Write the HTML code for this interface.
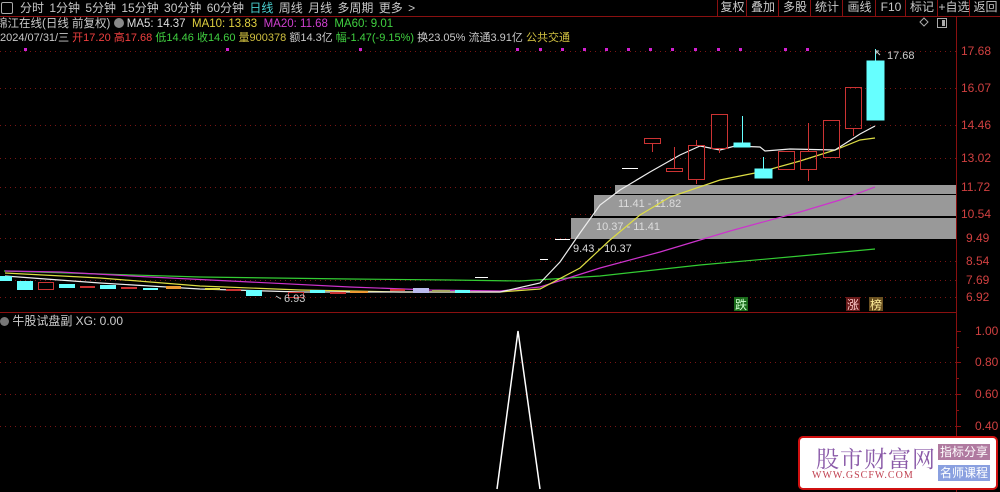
<!DOCTYPE html>
<html><head><meta charset="utf-8"><style>
*{margin:0;padding:0}
body{width:1000px;height:492px;background:#000;overflow:hidden;position:relative;font-family:"Liberation Sans","Noto Sans CJK SC",sans-serif;font-size:12px;color:#c8c8c8}
.tb{position:absolute;left:0;top:0;height:16px;width:1000px;border-bottom:1px solid #8a1010}
.t{position:absolute;top:1px;font-size:12px;line-height:14px;white-space:nowrap}
.btn{position:absolute;top:0;height:16px;border-left:1px solid #8a1010;text-align:center;line-height:15px;font-size:12px;color:#c8c8c8}
.l{position:absolute;white-space:nowrap;font-size:11px;line-height:13px}
</style></head><body>
<div class="tb">
<div style="position:absolute;left:1px;top:2px;width:10px;height:10px;border:1px solid #aaa;border-radius:2px"></div>
<span class="t" style="left:20px;word-spacing:2px">分时 1分钟 5分钟 15分钟 30分钟 60分钟 <span style="color:#4ad0d0">日线</span> 周线 月线 多周期 更多 &gt;</span>
<div class="btn" style="left:717px;width:29px">复权</div>
<div class="btn" style="left:746px;width:32px">叠加</div>
<div class="btn" style="left:778px;width:32px">多股</div>
<div class="btn" style="left:810px;width:32px">统计</div>
<div class="btn" style="left:842px;width:33px">画线</div>
<div class="btn" style="left:875px;width:30px">F10</div>
<div class="btn" style="left:905px;width:32px">标记</div>
<div class="btn" style="left:937px;width:32px">+自选</div>
<div class="btn" style="left:969px;width:31px">返回</div>
</div>
<div class="l" style="left:-4px;top:18px;font-size:11.5px">锦江在线(日线 前复权) <span style="display:inline-block;width:10px;height:10px;border-radius:5px;background:#888;vertical-align:-1px"></span> <span style="color:#ddd">MA5: 14.37</span> &nbsp;<span style="color:#e0d040">MA10: 13.83</span> &nbsp;<span style="color:#d040d0">MA20: 11.68</span> &nbsp;<span style="color:#40d040">MA60: 9.01</span></div>
<div class="l" style="left:0;top:32px;font-size:11px">2024/07/31/三 <span style="color:#f04040">开17.20 高17.68</span> <span style="color:#40d040">低14.46 收14.60</span> <span style="color:#d0c040">量900378</span> 额14.3亿 <span style="color:#40d040">幅-1.47(-9.15%)</span> 换23.05% 流通3.91亿 <span style="color:#d0c040">公共交通</span></div>
<svg width="1000" height="492" style="position:absolute;left:0;top:0">
<g stroke="#8a1010" stroke-width="1"><line x1="956.5" y1="17" x2="956.5" y2="492"/><line x1="0" y1="312.5" x2="956" y2="312.5"/></g>
<g stroke="#7a1515" stroke-dasharray="1,4"><line x1="0" y1="51.5" x2="956" y2="51.5"/><line x1="0" y1="88.5" x2="956" y2="88.5"/><line x1="0" y1="125.5" x2="956" y2="125.5"/><line x1="0" y1="158.5" x2="956" y2="158.5"/><line x1="0" y1="187.5" x2="956" y2="187.5"/><line x1="0" y1="214.5" x2="956" y2="214.5"/><line x1="0" y1="238.5" x2="956" y2="238.5"/><line x1="0" y1="261.5" x2="956" y2="261.5"/><line x1="0" y1="280.5" x2="956" y2="280.5"/><line x1="0" y1="297.5" x2="956" y2="297.5"/><line x1="0" y1="362.5" x2="956" y2="362.5"/><line x1="0" y1="394.5" x2="956" y2="394.5"/><line x1="0" y1="426.5" x2="956" y2="426.5"/></g>
<g fill="#d020d0" ><rect x="24" y="48" width="3" height="3"/><rect x="226" y="48" width="3" height="3"/><rect x="359" y="48" width="3" height="3"/><rect x="516" y="48" width="3" height="3"/><rect x="539" y="48" width="3" height="3"/><rect x="561" y="48" width="3" height="3"/><rect x="583" y="48" width="3" height="3"/><rect x="605" y="48" width="3" height="3"/><rect x="627" y="48" width="3" height="3"/><rect x="649" y="48" width="3" height="3"/><rect x="671" y="48" width="3" height="3"/><rect x="694" y="48" width="3" height="3"/><rect x="717" y="48" width="3" height="3"/><rect x="739" y="48" width="3" height="3"/><rect x="784" y="48" width="3" height="3"/><rect x="806" y="48" width="3" height="3"/></g>
<g fill="#999"><rect x="615" y="185" width="341" height="9"/><rect x="594" y="195" width="362" height="21"/><rect x="571" y="218" width="385" height="21"/></g>
<g fill="#ddd" font-size="11" font-family="Liberation Sans"><text x="618" y="207">11.41 - 11.82</text><text x="596" y="230">10.37 - 11.41</text><text x="573" y="252">9.43 - 10.37</text></g>
<g stroke="#fff"><line x1="555" y1="239.5" x2="570" y2="239.5"/><line x1="540" y1="259.5" x2="548" y2="259.5"/><line x1="622" y1="168.5" x2="638" y2="168.5"/><line x1="475" y1="277.5" x2="488" y2="277.5"/></g>
<g fill="none" stroke-width="1.2">
<polyline stroke="#3c3" points="4,271 100,274 200,277 350,279 450,280 520,281 600,276 700,265 800,256 875,249"/>
<polyline stroke="#c3c" points="5,271 60,272 150,277 250,282 350,287 430,290 500,291 540,287 600,268 660,252 730,231 800,212 840,200 875,187"/>
<polyline stroke="#dd4" points="5,273 100,278 200,286 300,290 400,292 500,292 540,289 580,268 610,240 640,215 670,197 720,180 760,172 800,161 835,150 860,140 875,138"/>
<polyline stroke="#eee" points="5,276 100,283 200,289 300,292 500,292 540,283 560,262 580,233 600,205 620,190 650,172 680,155 700,146 720,150 735,146 760,147 765,151 790,149 835,150 860,134 875,126"/>
</g>
<g stroke="#c33" fill="none">
<rect x="644.5" y="138.5" width="16" height="5"/><line x1="652.5" y1="143" x2="652.5" y2="152"/>
<rect x="666.5" y="168.5" width="16" height="3"/><line x1="674.5" y1="147" x2="674.5" y2="168"/>
<rect x="688.5" y="145.5" width="16" height="34"/><line x1="696.5" y1="140" x2="696.5" y2="145"/><line x1="696.5" y1="180" x2="696.5" y2="184"/>
<rect x="711.5" y="114.5" width="16" height="34"/><line x1="719.5" y1="148" x2="719.5" y2="153"/>
<rect x="778.5" y="151.5" width="16" height="18"/>
<rect x="800.5" y="151.5" width="16" height="18"/><line x1="808.5" y1="123" x2="808.5" y2="151"/><line x1="808.5" y1="169" x2="808.5" y2="181"/>
<rect x="823.5" y="120.5" width="16" height="37"/>
<rect x="845.5" y="87.5" width="16" height="41"/><line x1="853.5" y1="128" x2="853.5" y2="136"/>
<rect x="38.5" y="282.5" width="15" height="7"/><rect x="288.5" y="292.5" width="15" height="5"/>
</g>
<g fill="#6ff" stroke="#6ff">
<rect x="734" y="143" width="16" height="4"/><line x1="742.5" y1="116" x2="742.5" y2="143"/>
<rect x="755" y="169" width="17" height="9"/><line x1="763.5" y1="157" x2="763.5" y2="169"/>
<rect x="867" y="61" width="17" height="59"/><line x1="875.5" y1="49" x2="875.5" y2="61"/>
</g>
<g stroke="none">
<rect x="0" y="276" width="12" height="5" fill="#6ff"/><rect x="17" y="281" width="16" height="9" fill="#6ff"/><rect x="59" y="284" width="16" height="4" fill="#6ff"/><rect x="80" y="286" width="15" height="2" fill="#c33"/><rect x="100" y="285" width="16" height="4" fill="#6ff"/><rect x="121" y="287" width="16" height="2" fill="#c33"/><rect x="143" y="288" width="15" height="2" fill="#6ff"/><rect x="166" y="286" width="15" height="3" fill="#e93"/><rect x="205" y="288" width="15" height="2" fill="#dd4"/><rect x="226" y="289" width="15" height="2" fill="#c33"/><rect x="246" y="290" width="16" height="6" fill="#6ff"/><rect x="310" y="290" width="15" height="3" fill="#6ff"/><rect x="330" y="292" width="16" height="2" fill="#c33"/><rect x="350" y="291" width="18" height="2" fill="#e93"/><rect x="390" y="289" width="15" height="2" fill="#c33"/><rect x="413" y="288" width="16" height="5" fill="#bbe"/><rect x="432" y="290" width="18" height="2" fill="#aa6"/><rect x="455" y="290" width="15" height="3" fill="#6ff"/>
</g>
<g fill="#ccc" font-size="11" font-family="Liberation Sans"><text x="887" y="59">17.68</text><text x="284" y="302">6.93</text></g>
<path d="M880 55 l-4 -4 l0 3 M876 51 l3 0" stroke="#ccc" fill="none"/>
<path d="M281 299 l-5 -3" stroke="#ccc"/>
<g fill="#d04040" font-size="12" font-family="Liberation Sans"><text x="961" y="55">17.68</text><text x="961" y="92">16.07</text><text x="961" y="129">14.46</text><text x="961" y="162">13.02</text><text x="961" y="191">11.72</text><text x="961" y="218">10.54</text><text x="966" y="242">9.49</text><text x="966" y="265">8.54</text><text x="966" y="284">7.69</text><text x="966" y="301">6.92</text><text x="975" y="335">1.00</text><text x="975" y="366">0.80</text><text x="975" y="398">0.60</text><text x="975" y="430">0.40</text></g>
<g stroke="#8a1010"><line x1="956" y1="331.5" x2="961" y2="331.5"/><line x1="956" y1="347.5" x2="959" y2="347.5"/><line x1="956" y1="362.5" x2="961" y2="362.5"/><line x1="956" y1="378.5" x2="959" y2="378.5"/><line x1="956" y1="394.5" x2="961" y2="394.5"/><line x1="956" y1="410.5" x2="959" y2="410.5"/><line x1="956" y1="426.5" x2="961" y2="426.5"/></g>
<polyline points="497,489 518,331 540,489" stroke="#fff" fill="none" stroke-width="1.5"/>
<rect x="734" y="297" width="14" height="14" fill="#1a6a1a"/><text x="735" y="309" fill="#cfc" font-size="12">跌</text>
<rect x="846" y="297" width="14" height="14" fill="#6a1a1a"/><text x="847" y="309" fill="#fcc" font-size="12">涨</text>
<rect x="869" y="297" width="14" height="14" fill="#6a5020"/><text x="870" y="309" fill="#fe9" font-size="12">榜</text>
<path d="M924 18 l4 4 l-4 4 l-4 -4z" stroke="#aaa" fill="none"/><rect x="937.5" y="18.5" width="9" height="9" stroke="#aaa" fill="none"/><rect x="942" y="20" width="3" height="6" fill="#aaa"/>
</svg>
<div class="l" style="left:0;top:315px;font-size:12px;color:#ccc"><span style="display:inline-block;width:9px;height:9px;border-radius:5px;background:#777;vertical-align:-1px"></span> 牛股试盘副 XG: 0.00</div>
<div style="position:absolute;left:798px;top:436px;width:196px;height:50px;background:#fff;border:2px solid #d01010;border-radius:5px">
<div style="position:absolute;left:16px;top:3px;font-size:23px;color:#8a5aa8;font-family:'Noto Serif CJK SC',serif;letter-spacing:1px">股市财富网</div>
<div style="position:absolute;left:12px;top:32px;font-size:10px;color:#c04050;font-family:'Liberation Serif',serif;letter-spacing:1px">WWW.GSCFW.COM</div>
<div style="position:absolute;left:138px;top:6px;width:52px;height:16px;background:#b07aa0;color:#fff;font-size:12px;text-align:center;line-height:16px">指标分享</div>
<div style="position:absolute;left:138px;top:27px;width:52px;height:16px;background:#8aa0e0;color:#fff;font-size:12px;text-align:center;line-height:16px">名师课程</div>
</div>
</body></html>
